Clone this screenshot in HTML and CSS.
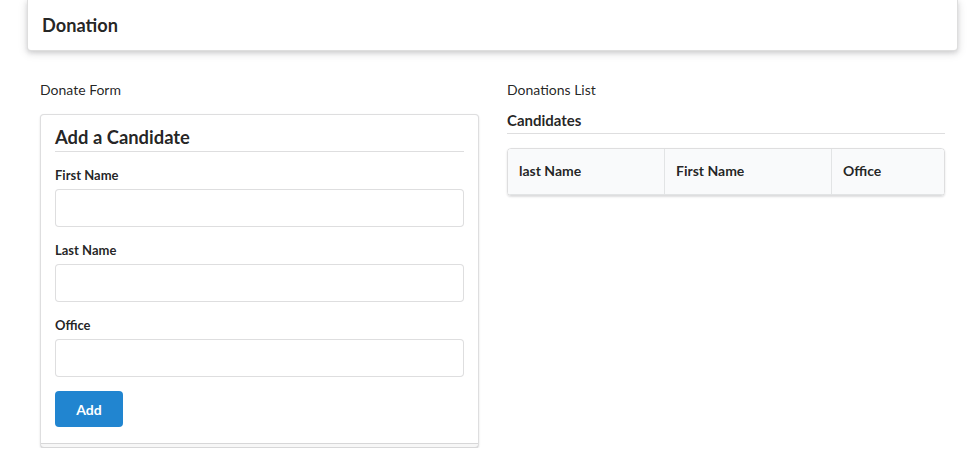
FILE: index.html
```html
<!DOCTYPE html>
<html lang="en">
<head>
<meta charset="utf-8">
<title>Donation</title>
<link rel="stylesheet" href="styles.css">
</head>
<body>
  <header class="topbar">
    <h1 class="topbar-title">Donation</h1>
  </header>
  <main class="columns">
    <section class="col">
      <div class="col-label">Donate Form</div>
      <form class="card">
        <h2 class="card-title">Add a Candidate</h2>
        <div class="field">
          <label class="field-label">First Name</label>
          <input class="field-input" type="text">
        </div>
        <div class="field">
          <label class="field-label">Last Name</label>
          <input class="field-input" type="text">
        </div>
        <div class="field">
          <label class="field-label">Office</label>
          <input class="field-input" type="text">
        </div>
        <button class="btn" type="button">Add</button>
      </form>
    </section>
    <section class="col">
      <div class="col-label">Donations List</div>
      <h3 class="list-title">Candidates</h3>
      <table class="table">
        <thead>
          <tr>
            <th class="c1">last Name</th>
            <th class="c2">First Name</th>
            <th class="c3">Office</th>
          </tr>
        </thead>
      </table>
    </section>
  </main>
</body>
</html>
```

FILE: styles.css
```css
* { box-sizing: border-box; }
html, body { margin: 0; padding: 0; background: #fff; }
body {
  font-family: Lato, "Helvetica Neue", Arial, sans-serif;
  font-size: 14px;
  color: rgba(0,0,0,.87);
}
.topbar {
  margin-left: 27px;
  width: 931px;
  height: 51px;
  background: #fff;
  border: 1px solid rgba(34,36,38,.15);
  border-top: none;
  border-radius: 0 0 4px 4px;
  box-shadow: 0 2px 4px 0 rgba(34,36,38,.12), 0 2px 10px 0 rgba(34,36,38,.15);
  padding: 12px 14px 0;
}
.topbar-title {
  margin: 0;
  font-size: 18.2px;
  line-height: 26px;
  font-weight: 700;
  color: rgba(0,0,0,.87);
}
.columns {
  display: grid;
  grid-template-columns: 439px 438px;
  column-gap: 28px;
  margin-left: 40px;
  padding-top: 29px;
}
.col-label {
  line-height: 20px;
  font-size: 14px;
}
.card {
  position: relative;
  margin-top: 14px;
  border: 1px solid rgba(34,36,38,.15);
  border-radius: 4px;
  box-shadow: 0 1px 2px 0 rgba(34,36,38,.15);
  padding: 9px 14px 20px;
  background: #fff;
}
.card::after {
  content: "";
  position: absolute;
  left: 0;
  right: 0;
  bottom: -3px;
  height: 6px;
  border-top: 1px solid rgba(34,36,38,.15);
  background: rgba(0,0,0,.03);
}
.card-title {
  margin: 0;
  font-size: 18.4px;
  line-height: 26px;
  font-weight: 700;
  padding-bottom: 1px;
  border-bottom: 1px solid rgba(34,36,38,.15);
}
.field { display: flex; flex-direction: column; margin-top: 15px; }
.field-label {
  font-size: 13px;
  font-weight: 700;
  line-height: 16px;
  margin-bottom: 6px;
}
.field-input {
  height: 38px;
  border: 1px solid rgba(34,36,38,.15);
  border-radius: 4px;
  padding: 0 14px;
  font: inherit;
  background: #fff;
}
.btn {
  margin-top: 14px;
  width: 68px;
  height: 36px;
  border: none;
  border-radius: 4px;
  background: #2185d0;
  color: #fff;
  font-family: Lato, "Helvetica Neue", Arial, sans-serif;
  font-size: 14px;
  font-weight: 700;
  padding: 0;
  display: block;
}
.list-title {
  margin: 10px 0 0;
  font-size: 15px;
  line-height: 20px;
  font-weight: 700;
  padding-bottom: 3px;
  border-bottom: 1px solid rgba(34,36,38,.15);
  width: 438px;
}
.table {
  margin-top: 14px;
  width: 438px;
  border-collapse: separate;
  border-spacing: 0;
  border: 1px solid rgba(34,36,38,.15);
  border-radius: 4px;
  box-shadow: 0 1px 2px 0 rgba(34,36,38,.15);
  overflow: hidden;
}
.table th {
  background: #f9fafb;
  text-align: left;
  font-size: 14px;
  font-weight: 700;
  line-height: 20px;
  padding: 12px 11px 13px;
  border-bottom: 1px solid rgba(34,36,38,.1);
  color: rgba(0,0,0,.87);
}
.table th + th { border-left: 1px solid rgba(34,36,38,.1); }
.table .c1 { width: 156px; }
.table .c2 { width: 167px; }
.table .c3 { width: auto; }
```
